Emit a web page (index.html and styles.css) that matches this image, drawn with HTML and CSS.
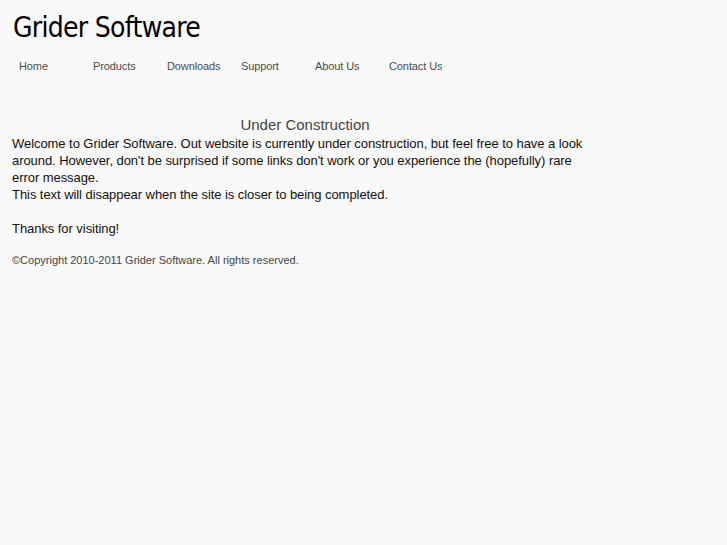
FILE: index.html
```html
<!DOCTYPE html>
<html lang="en">
<head>
    <meta charset="UTF-8">
    <title>Grider Software</title>
    <link rel="stylesheet" href="styles.css">
</head>
<body>
    <div class="page">
        <div class="header">
            <h1 class="logo">Grider Software</h1>
        </div>
        <ul class="nav">
            <li><a href="#">Home</a></li>
            <li><a href="#">Products</a></li>
            <li><a href="#">Downloads</a></li>
            <li><a href="#">Support</a></li>
            <li><a href="#">About Us</a></li>
            <li><a href="#">Contact Us</a></li>
        </ul>
        <div class="content">
            <h2>Under Construction</h2>
            <p>Welcome to Grider Software. Out website is currently under construction, but feel free to have a look around. However, don't be surprised if some links don't work or you experience the (hopefully) rare error message.<br>
            This text will disappear when the site is closer to being completed.<br>
            <br>
            Thanks for visiting!</p>
        </div>
        <div class="footer">&copy;Copyright 2010-2011 Grider Software. All rights reserved.</div>
    </div>
</body>
</html>
```

FILE: styles.css
```css
body {
    margin: 0;
    background-color: #f9f9f9;
    font-family: "Liberation Sans", Arial, sans-serif;
    color: #111;
}

.page {
    width: 586px;
    padding: 0 12px;
}

.header {
    height: 50px;
}

.logo {
    margin: 0 0 0 1px;
    padding-top: 10px;
    font-family: "DejaVu Sans Condensed", "DejaVu Sans", sans-serif;
    font-weight: normal;
    font-size: 28px;
    line-height: 36px;
    color: #000;
    letter-spacing: -0.7px;
}

.nav {
    display: flex;
    list-style: none;
    margin: 0;
    padding: 0 0 0 7px;
    height: 30px;
    align-items: center;
}

.nav li {
    width: 74px;
}

.nav a {
    font-size: 11px;
    color: #4d4d4d;
    text-decoration: none;
    letter-spacing: -0.1px;
}

.content {
    padding-top: 35px;
}

.content h2 {
    margin: 0;
    text-align: center;
    font-weight: normal;
    font-size: 15px;
    line-height: 20px;
    color: #444;
}

.content p {
    margin: 0;
    font-size: 13px;
    line-height: 17px;
    letter-spacing: -0.06px;
}

.footer {
    margin-top: 17px;
    font-size: 11px;
    color: #444;
}
```
